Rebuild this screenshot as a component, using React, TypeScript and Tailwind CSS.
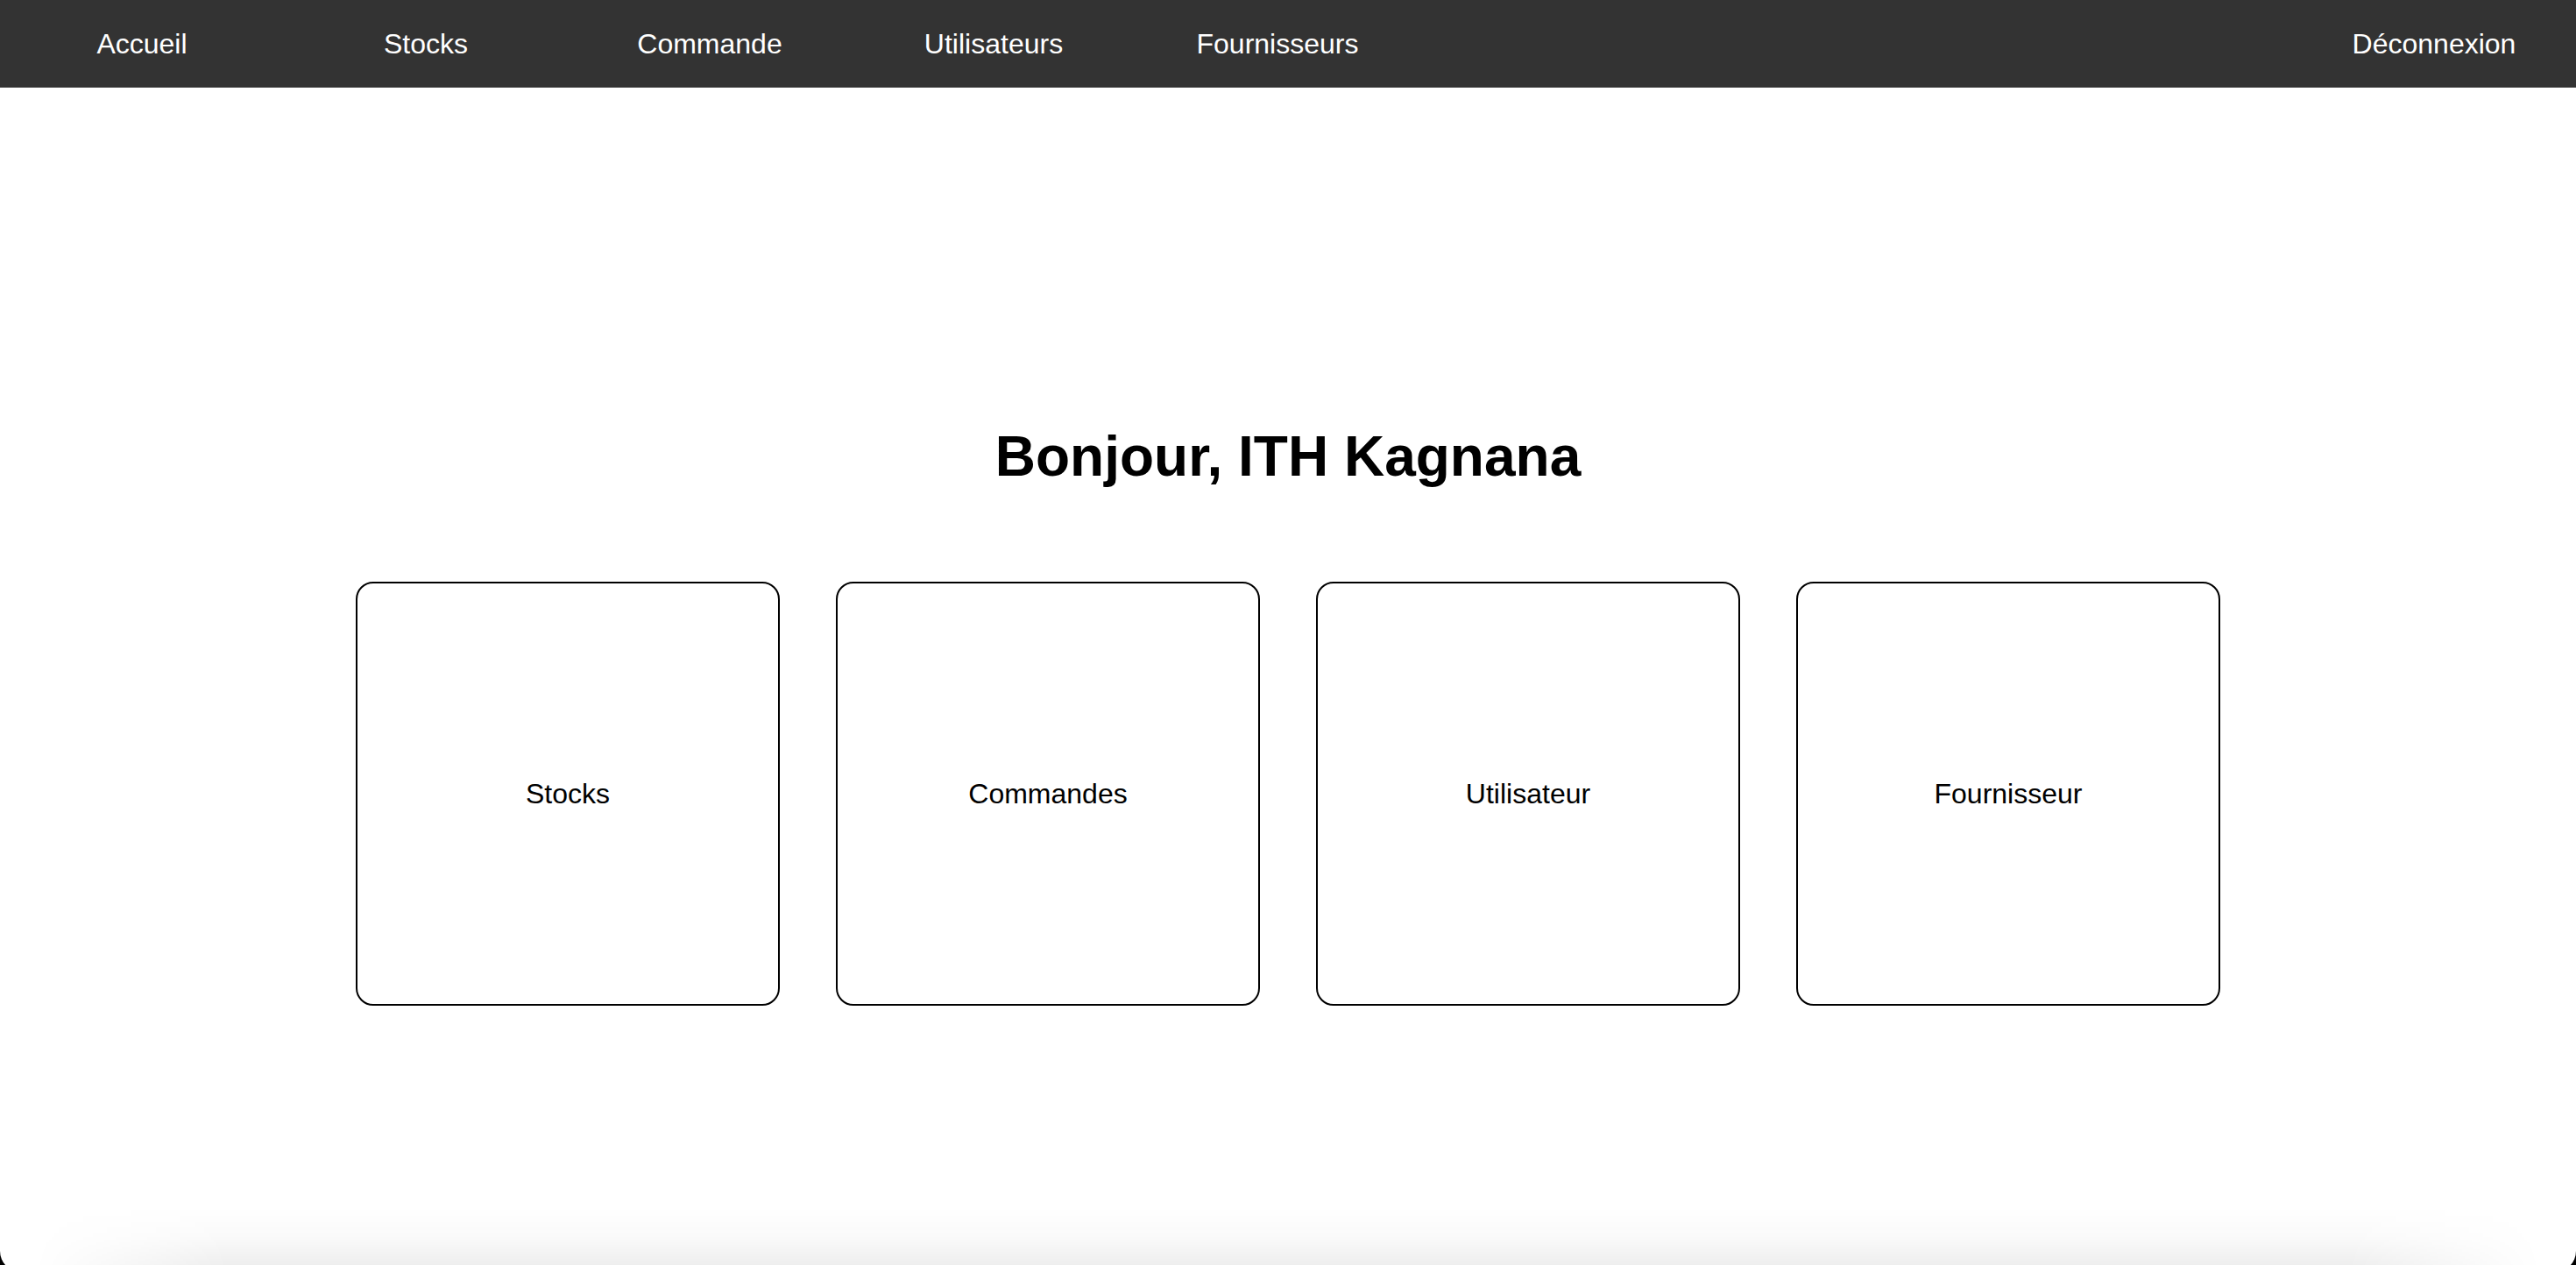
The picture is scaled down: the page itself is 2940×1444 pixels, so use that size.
import React from "react";

const navItems = ["Accueil", "Stocks", "Commande", "Utilisateurs", "Fournisseurs"];
const cards = ["Stocks", "Commandes", "Utilisateur", "Fournisseur"];

export default function App() {
  return (
    <div className="h-[1444px] w-full overflow-hidden bg-black font-['Liberation_Sans',Arial,Helvetica,sans-serif]">
      <div className="relative flex h-[1452px] w-full flex-col overflow-hidden rounded-b-[24px] bg-white">
        <nav className="flex h-[100px] w-full shrink-0 items-center bg-[#333333] text-white">
          {navItems.map((item) => (
            <a key={item} className="w-[324px] text-center text-[32px] leading-[37px]">
              {item}
            </a>
          ))}
          <a className="ml-auto w-[324px] text-center text-[32px] leading-[37px]">Déconnexion</a>
        </nav>
        <main className="flex flex-1 flex-col items-center pt-[384px]">
          <h1 className="m-0 text-[64px] font-bold leading-[74px] text-black">Bonjour, ITH Kagnana</h1>
          <div className="mt-[106px] flex justify-center gap-16">
            {cards.map((c) => (
              <div
                key={c}
                className="flex h-[484px] w-[484px] items-center justify-center rounded-[20px] border-2 border-black text-[32px] text-black"
              >
                {c}
              </div>
            ))}
          </div>
        </main>
        <div className="pointer-events-none absolute bottom-[8px] left-0 right-0 h-[66px] bg-[linear-gradient(to_bottom,rgba(0,0,0,0),rgba(0,0,0,0.02)_50%,rgba(0,0,0,0.065))] [mask-image:linear-gradient(to_right,transparent_40px,black_260px,black_calc(100%-260px),transparent_calc(100%-40px))]" />
      </div>
    </div>
  );
}
